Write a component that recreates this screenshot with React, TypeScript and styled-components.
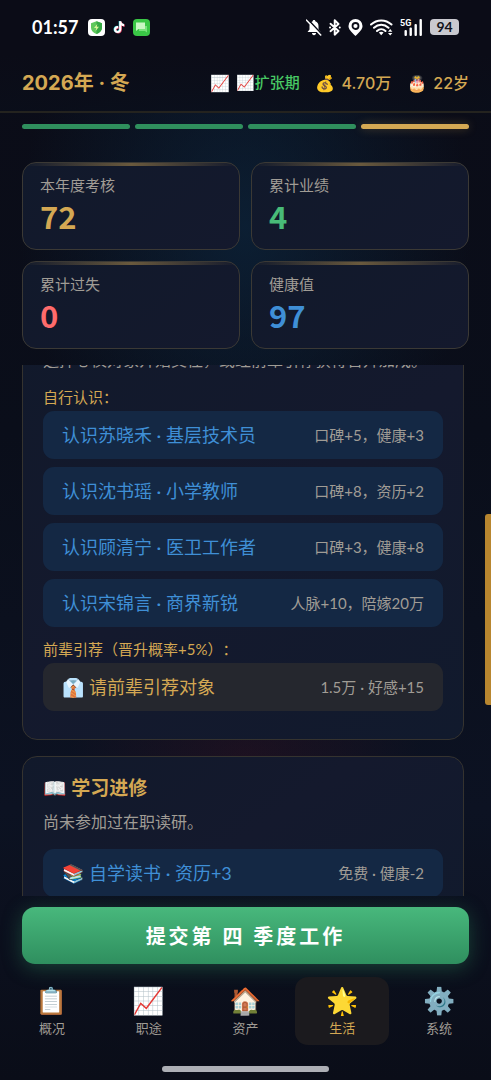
import React from "react";
import styled, { createGlobalStyle } from "styled-components";

const gold = "#d4a853";
const blue = "#3f8fd6";
const green = "#48bb78";
const red = "#ff6b6b";
const muted = "#a09c95";
const line = "#35332f";

const GlobalStyle = createGlobalStyle`
  * { box-sizing: border-box; }
  body {
    margin: 0;
    background: #0a0e1a;
    color: ${muted};
    font-family: Lato, "Noto Sans CJK SC", "Noto Color Emoji", sans-serif;
    text-spacing-trim: space-all;
  }
  button { font: inherit; border: 0; margin: 0; cursor: pointer; }
  p, h1, h2, ul, dl, dd { margin: 0; padding: 0; }
`;

const Shell = styled.div`
  display: flex;
  flex-direction: column;
  height: 100vh;
  overflow: hidden;
  background:
    radial-gradient(ellipse 46% 26% at 50% 21%, rgba(12, 42, 68, 0.6), transparent),
    radial-gradient(ellipse 36% 10% at 50% 70%, rgba(60, 16, 32, 0.35), transparent),
    linear-gradient(180deg, #0b0c17 0%, #0a0e1a 40%, #0c1222 75%, #0a0d18 100%);
`;

const StatusBar = styled.div`
  display: flex;
  align-items: center;
  justify-content: space-between;
  flex: none;
  height: 54px;
  padding: 0 32px;
  background: #0b0c17;
  color: #fff;
`;

const StatusGroup = styled.div<{ $gap: number }>`
  display: flex;
  align-items: center;
  gap: ${(p) => p.$gap}px;
`;

const Clock = styled.span`
  margin-right: 2px;
  font-size: 18px;
  font-weight: 700;
  line-height: 24px;
`;

const Battery = styled.span`
  width: 29px;
  height: 16px;
  border-radius: 4px;
  background: #c9c9cf;
  color: #14141c;
  font-size: 14px;
  font-weight: 700;
  line-height: 16px;
  text-align: center;
`;

const Header = styled.header`
  display: flex;
  align-items: center;
  justify-content: space-between;
  flex: none;
  height: 59px;
  padding: 0 22px;
  border-bottom: 2px solid #24231f;
  background: linear-gradient(180deg, #0b0c17, rgba(10, 14, 26, 0.85));
  color: ${gold};
  font-family: Inter, "Noto Sans CJK SC", "Noto Color Emoji", sans-serif;
`;

const DateTitle = styled.h1`
  font-size: 20px;
  font-weight: 700;
  line-height: 28px;
`;

const Facts = styled.div`
  display: flex;
  gap: 16px;
  font-size: 16px;
  font-weight: 500;
  line-height: 24px;
  white-space: nowrap;
`;

const Fact = styled.span`
  display: flex;
  align-items: center;
  gap: 6px;
`;

const Phase = styled.span`
  color: #48c864;
  font-size: 15px;
`;

const Quarters = styled.div`
  display: flex;
  flex: none;
  gap: 5px;
  padding: 11px 22px 0;
`;

const Quarter = styled.span<{ $current?: boolean }>`
  flex: 1;
  height: 5px;
  border-radius: 3px;
  background: ${(p) => (p.$current ? gold : "#2f8f5d")};
  box-shadow: ${(p) => (p.$current ? "0 0 10px rgba(212, 168, 83, 0.3)" : "none")};
`;

const Stats = styled.dl`
  display: grid;
  flex: none;
  grid-template-columns: 1fr 1fr;
  gap: 11px;
  padding: 33px 22px 16px;
`;

const Stat = styled.div`
  height: 88px;
  padding: 11px 17px;
  overflow: hidden;
  border: 1px solid #3b3935;
  border-radius: 14px;
  background:
    linear-gradient(90deg, transparent, rgba(212, 168, 83, 0.45), transparent) top / 100% 3px no-repeat,
    linear-gradient(145deg, #11192b, #14192d);
`;

const StatLabel = styled.dt`
  font-size: 15px;
  line-height: 22px;
`;

const StatValue = styled.dd<{ $color: string }>`
  color: ${(p) => p.$color};
  font-family: "Noto Sans CJK SC", sans-serif;
  font-size: 31px;
  font-weight: 700;
  line-height: 40px;
`;

const Viewport = styled.main`
  position: relative;
  flex: 1;
  min-height: 0;
  padding: 0 27px 0 22px;
  overflow: hidden;
`;

const ScrollThumb = styled.span`
  position: absolute;
  top: 28%;
  right: 0;
  width: 6px;
  height: 36%;
  border-radius: 3px 0 0 3px;
  background: #b8862f;
`;

const Card = styled.section<{ $scrolled?: boolean }>`
  margin-top: ${(p) => (p.$scrolled ? -39 : 16)}px;
  padding: 20px;
  border: 1px solid ${line};
  border-radius: 15px;
  background: linear-gradient(145deg, #11192b, #14192d 50%, #111a2d);
`;

const CardTitle = styled.h2`
  margin-bottom: 10px;
  color: ${gold};
  font-size: 19px;
  font-weight: 700;
  line-height: 22px;
`;

const Description = styled.p<{ $gap: number }>`
  margin-bottom: ${(p) => p.$gap}px;
  font-size: 16px;
  line-height: 26px;
  white-space: nowrap;
`;

const GroupLabel = styled.p`
  color: ${gold};
  font-size: 15px;
  line-height: 28px;
`;

const Action = styled.button<{ $gold?: boolean }>`
  display: flex;
  align-items: center;
  justify-content: space-between;
  width: 100%;
  height: 48px;
  margin-bottom: 8px;
  padding: 0 19px;
  border-radius: 11px;
  background: ${(p) => (p.$gold ? "#25272e" : "#142844")};
  color: ${(p) => (p.$gold ? gold : blue)};
  white-space: nowrap;
`;

const ActionName = styled.span`
  font-size: 18px;
  line-height: 26px;
`;

const ActionNote = styled.span`
  color: ${muted};
  font-size: 15px;
  line-height: 22px;
`;

const Submit = styled.button`
  flex: none;
  height: 57px;
  margin: 11px 22px 13px;
  border-radius: 13px;
  background: linear-gradient(180deg, #48b87c, #2f8f5f);
  box-shadow: 0 4px 20px rgba(47, 143, 95, 0.4);
  color: #fff;
  font-size: 20px;
  font-weight: 700;
  letter-spacing: 3px;
`;

const Nav = styled.nav`
  display: flex;
  flex: none;
  gap: 3px;
  padding: 0 5px;
`;

const Tab = styled.button<{ $active?: boolean }>`
  display: flex;
  flex: 1;
  flex-direction: column;
  align-items: center;
  height: 68px;
  padding: 6px 0;
  border-radius: 13px;
  background: ${(p) => (p.$active ? "#1b1a1e" : "transparent")};
  color: ${(p) => (p.$active ? gold : muted)};
`;

const TabIcon = styled.span`
  font-size: 26px;
  line-height: 35px;
`;

const TabLabel = styled.span`
  font-size: 13px;
  line-height: 20px;
`;

const HomeBar = styled.span`
  flex: none;
  align-self: center;
  width: 34%;
  height: 6px;
  margin: 21px 0 8px;
  border-radius: 3px;
  background: #adafb5;
`;

const ShieldIcon = () => (
  <svg width="17" height="17" viewBox="0 0 17 17">
    <rect width="17" height="17" rx="4" fill="#fff" />
    <path d="M8.500 2.300 14 4.200v4.300c0 3.200-2.300 5.200-5.500 6.500C5.300 13.700 3 11.700 3 8.500V4.200Z" fill="#5fc85c" />
    <path d="M8.500 2.300 14 4.200v4.300c0 3.200-2.300 5.200-5.500 6.500Z" fill="#36a944" />
    <path d="M9.300 5 6 9h2.200l-.6 3 3.400-4.200H8.800Z" fill="#d9f59a" />
  </svg>
);

const notePath = "M6.200 1.200h2.100c.2 1.700 1.100 2.700 2.800 2.900v2.100c-1.100 0-2-.3-2.800-.9v4c0 2.300-1.600 3.800-3.700 3.800S1 11.600 1 9.600s1.700-3.700 4.100-3.500v2.200c-1.200-.2-2 .4-2 1.300 0 .8.600 1.400 1.500 1.400s1.600-.6 1.600-1.700Z";

const NoteIcon = () => (
  <svg width="12" height="15" viewBox="0 0 12 15">
    <path d={notePath} fill="#25d6dd" transform="translate(-.5 -.3)" />
    <path d={notePath} fill="#f0476b" transform="translate(.6 .5)" />
    <path d={notePath} fill="#fff" />
  </svg>
);

const ChatIcon = () => (
  <svg width="17" height="17" viewBox="0 0 17 17">
    <rect width="17" height="17" rx="4" fill="#3ac746" />
    <path d="M6 7h8v6.500l-2-1.500H6Z" fill="#79e37c" />
    <path d="M3 3.500h9v6.500H5.500L3 12Z" fill="#c9f7c4" />
  </svg>
);

const MuteIcon = () => (
  <svg width="16" height="17" viewBox="0 0 16 17">
    <path d="M8 1c.8 0 1.300.5 1.300 1.300 2 .6 3.200 2.300 3.200 4.700v3.500l2 2.500h-13l2-2.500V7c0-2.400 1.200-4.100 3.200-4.700C6.700 1.500 7.200 1 8 1Z" fill="#fff" />
    <path d="M6 14h4c0 1.300-.8 2.200-2 2.200S6 15.300 6 14Z" fill="#fff" />
    <path d="M1.500 0 16 15.500" stroke="#0b0c17" strokeWidth="1.600" />
    <path d="M.5 1.200 14.700 16" stroke="#fff" strokeWidth="1.600" strokeLinecap="round" />
  </svg>
);

const BluetoothIcon = () => (
  <svg width="12" height="17" viewBox="0 0 12 17" fill="none" stroke="#fff" strokeWidth="1.900" strokeLinejoin="round" strokeLinecap="round">
    <path d="M1.500 4.800 9.500 12 5.700 15.700V1.300L9.500 5l-8 7.200" />
    <path d="M1 8.500h.1M10.700 8.500h.1" />
  </svg>
);

const PinIcon = () => (
  <svg width="15" height="17" viewBox="0 0 15 17">
    <path d="M7.500 0a7 7 0 0 1 7 7c0 3.300-2.500 5.600-7 10C3 12.600.5 10.300.5 7a7 7 0 0 1 7-7Z" fill="#fff" />
    <circle cx="7.500" cy="7" r="3" fill="none" stroke="#0b0c17" strokeWidth="1.800" />
  </svg>
);

const WifiIcon = () => (
  <svg width="23" height="17" viewBox="0 0 23 17" fill="none" stroke="#fff" strokeWidth="2" strokeLinecap="round">
    <path d="M1 5.500C7 0 15.500 0 21.500 5.500M4 8.800c4.300-4 10.200-4 14.500 0M7 12c2.500-2.300 6-2.300 8.500 0" />
    <path d="m8.800 13.600 2.400 2.700 2.400-2.700c-1.400-1.100-3.400-1.100-4.800 0Z" fill="#fff" stroke="none" />
    <path d="m18 12.700 2.200-2.700 2.200 2.700ZM18 13.900l2.200 2.700 2.200-2.700Z" fill="#fff" stroke="none" />
  </svg>
);

const SignalIcon = () => (
  <svg width="23" height="17" viewBox="0 0 23 17" fill="#fff">
    <text x="0" y="7" fontFamily="Roboto, sans-serif" fontSize="9" fontWeight="700">5G</text>
    <rect x="4.500" y="11" width="2.400" height="6" rx="1" />
    <rect x="9.500" y="8.500" width="2.400" height="8.500" rx="1" />
    <rect x="14.500" y="5" width="2.400" height="12" rx="1" />
    <rect x="19.500" y="0" width="2.400" height="17" rx="1" />
  </svg>
);

const stats = [
  { label: "本年度考核", value: 72, color: gold },
  { label: "累计业绩", value: 4, color: green },
  { label: "累计过失", value: 0, color: red },
  { label: "健康值", value: 97, color: blue },
];

const people = [
  { name: "认识苏晓禾 · 基层技术员", note: "口碑+5，健康+3" },
  { name: "认识沈书瑶 · 小学教师", note: "口碑+8，资历+2" },
  { name: "认识顾清宁 · 医卫工作者", note: "口碑+3，健康+8" },
  { name: "认识宋锦言 · 商界新锐", note: "人脉+10，陪嫁20万" },
];

const tabs = [
  { icon: "📋", label: "概况" },
  { icon: "📈", label: "职途" },
  { icon: "🏠", label: "资产" },
  { icon: "🌟", label: "生活", active: true },
  { icon: "⚙️", label: "系统" },
];

export default function App() {
  return (
    <Shell>
      <GlobalStyle />
      <StatusBar>
        <StatusGroup $gap={8}>
          <Clock>01:57</Clock>
          <ShieldIcon />
          <NoteIcon />
          <ChatIcon />
        </StatusGroup>
        <StatusGroup $gap={7}>
          <MuteIcon />
          <BluetoothIcon />
          <PinIcon />
          <WifiIcon />
          <SignalIcon />
          <Battery>94</Battery>
        </StatusGroup>
      </StatusBar>

      <Header>
        <DateTitle>2026年 · 冬</DateTitle>
        <Facts>
          <Fact>
            <span>📈</span>
            <Phase>📈扩张期</Phase>
          </Fact>
          <Fact>
            <span>💰</span>
            <span>4.70万</span>
          </Fact>
          <Fact>
            <span>🎂</span>
            <span>22岁</span>
          </Fact>
        </Facts>
      </Header>

      <Quarters>
        <Quarter />
        <Quarter />
        <Quarter />
        <Quarter $current />
      </Quarters>

      <Stats>
        {stats.map((s) => (
          <Stat key={s.label}>
            <StatLabel>{s.label}</StatLabel>
            <StatValue $color={s.color}>{s.value}</StatValue>
          </Stat>
        ))}
      </Stats>

      <Viewport>
        <Card $scrolled>
          <Description $gap={10}>选择心仪对象开始交往，或经前辈引荐获得晋升加成。</Description>
          <GroupLabel>自行认识：</GroupLabel>
          {people.map((p) => (
            <Action key={p.name}>
              <ActionName>{p.name}</ActionName>
              <ActionNote>{p.note}</ActionNote>
            </Action>
          ))}
          <GroupLabel>前辈引荐（晋升概率+5%）：</GroupLabel>
          <Action $gold>
            <ActionName>👔 请前辈引荐对象</ActionName>
            <ActionNote>1.5万 · 好感+15</ActionNote>
          </Action>
        </Card>
        <Card>
          <CardTitle>📖 学习进修</CardTitle>
          <Description $gap={14}>尚未参加过在职读研。</Description>
          <Action>
            <ActionName>📚 自学读书 · 资历+3</ActionName>
            <ActionNote>免费 · 健康-2</ActionNote>
          </Action>
        </Card>
        <ScrollThumb />
      </Viewport>

      <Submit>提交第 四 季度工作</Submit>

      <Nav>
        {tabs.map((t) => (
          <Tab key={t.label} $active={t.active}>
            <TabIcon>{t.icon}</TabIcon>
            <TabLabel>{t.label}</TabLabel>
          </Tab>
        ))}
      </Nav>
      <HomeBar />
    </Shell>
  );
}
